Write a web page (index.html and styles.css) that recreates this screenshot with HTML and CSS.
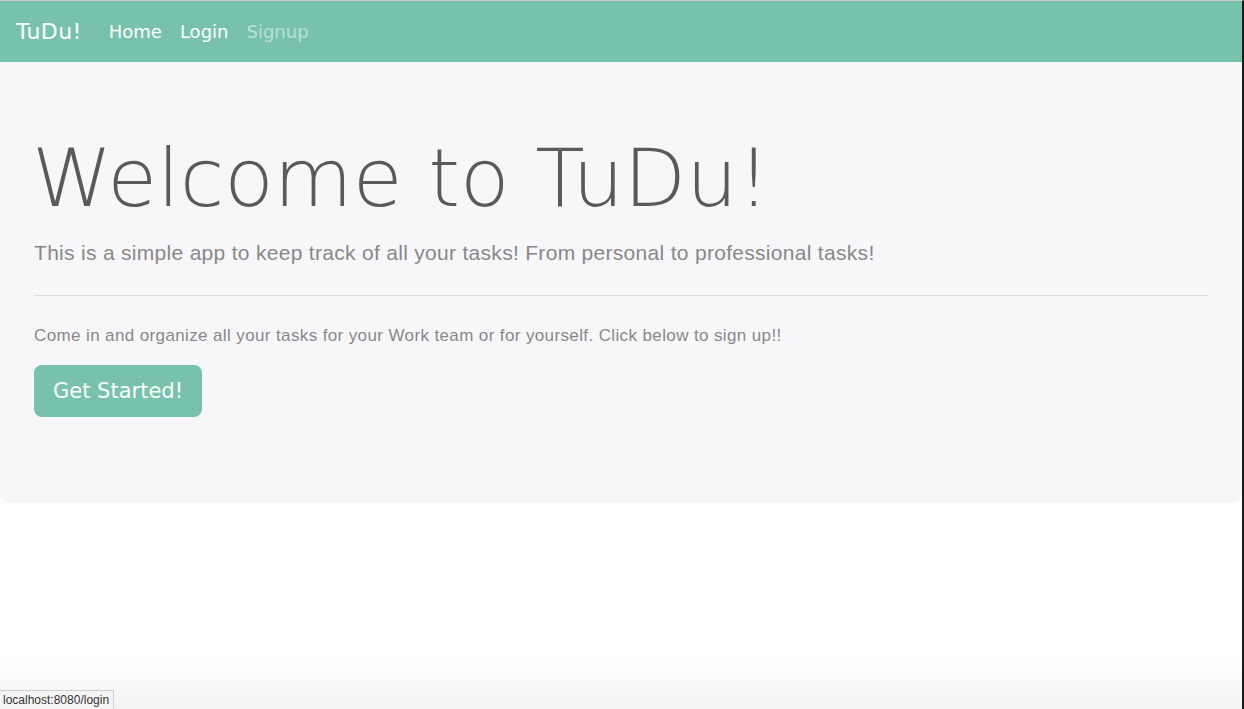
FILE: index.html
```html
<!DOCTYPE html>
<html lang="en">
<head>
<meta charset="utf-8">
<title>TuDu!</title>
<link rel="stylesheet" href="styles.css">
</head>
<body>
<div class="window">
  <nav class="navbar">
    <a class="brand" href="#">TuDu!</a>
    <ul class="nav">
      <li><a class="nav-link active" href="#">Home</a></li>
      <li><a class="nav-link active" href="#">Login</a></li>
      <li><a class="nav-link" href="#">Signup</a></li>
    </ul>
  </nav>
  <section class="jumbotron">
    <h1 class="display">Welcome to TuDu!</h1>
    <p class="lead">This is a simple app to keep track of all your tasks! From personal to professional tasks!</p>
    <hr class="divider">
    <p class="body-text">Come in and organize all your tasks for your Work team or for yourself. Click below to sign up!!</p>
    <p class="cta"><a class="btn" href="#">Get Started!</a></p>
  </section>
  <div class="status">localhost:8080/login</div>
</div>
</body>
</html>
```

FILE: styles.css
```css
* { box-sizing: border-box; }
html, body { margin: 0; padding: 0; }
body {
  width: 1244px;
  height: 709px;
  overflow: hidden;
  background: #fff;
  font-family: "Liberation Sans", Arial, sans-serif;
  color: #888;
}
.window {
  position: relative;
  width: 1244px;
  height: 709px;
  border-top: 1px solid #c9c9c9;
  border-right: 2px solid #1a1a1a;
  background: linear-gradient(to bottom, #fff 0, #fff 655px, #f3f3f3 709px);
}
.navbar {
  display: flex;
  align-items: center;
  height: 61px;
  padding: 0 16px;
  background: #78c2ad;
  font-family: "DejaVu Sans", sans-serif;
}
.brand {
  color: #fff;
  text-decoration: none;
  font-size: 22px;
  letter-spacing: 0.4px;
  margin-right: 18px;
}
.nav {
  display: flex;
  list-style: none;
  margin: 0;
  padding: 0;
}
.nav-link {
  display: block;
  padding: 8px 9px;
  color: rgba(255,255,255,0.5);
  text-decoration: none;
  font-size: 18px;
  letter-spacing: 0;
}
.nav-link.active { color: #fff; }
.jumbotron {
  background: #f7f7f9;
  border-radius: 0 0 9px 9px;
  padding: 68px 34px 70px;
}
.display {
  margin: 0 0 10px -2px;
  font-family: "DejaVu Sans", sans-serif;
  font-weight: 200;
  font-size: 81px;
  line-height: 1.2;
  color: #5a5a5a;
}
.lead {
  margin: 0;
  font-size: 21px;
  letter-spacing: 0.3px;
  line-height: 1.5;
  color: #888;
}
.divider {
  border: 0;
  border-top: 1px solid #dedee0;
  margin: 26px 0 27px;
}
.body-text {
  margin: 0 0 17px;
  font-size: 17px;
  letter-spacing: 0.38px;
  line-height: 1.5;
  color: #888;
}
.cta { margin: 0 0 16px; }
.btn {
  display: inline-block;
  background: #78c2ad;
  color: #fff;
  text-decoration: none;
  font-family: "DejaVu Sans", sans-serif;
  font-size: 21px;
  line-height: 30px;
  padding: 11px 19px;
  border-radius: 8px;
}
.status {
  position: absolute;
  left: 0;
  bottom: 0;
  padding: 2px 4px 2px 3px;
  font-size: 12px;
  color: #333;
  background: #f5f5f5;
  border: 1px solid #cfcfcf;
  border-left: 0;
  border-bottom: 0;
}
```
